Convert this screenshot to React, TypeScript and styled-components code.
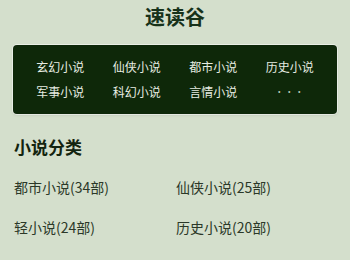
import React from "react";
import styled, { createGlobalStyle } from "styled-components";

const Global = createGlobalStyle`
  html, body { margin: 0; padding: 0; background: #d4dfcc; }
  body { font-family: "Noto Sans CJK SC", "Noto Sans", sans-serif; }
`;

const Page = styled.div`
  width: 350px;
  height: 260px;
  overflow: hidden;
  background: #d4dfcc;
`;

const Title = styled.h1`
  margin: 0;
  height: 34px;
  line-height: 34px;
  text-align: center;
  font-size: 20px;
  font-weight: 700;
  color: #17321a;
`;

const Nav = styled.nav`
  margin: 11px 13px 0;
  padding: 9px 9px 10px;
  background: #0e2809;
  border-radius: 4px;
  box-shadow: 0 0 0 1px rgba(255, 255, 255, 0.55), 0 1px 3px rgba(0, 0, 0, 0.12);
  display: grid;
  grid-template-columns: repeat(4, 1fr);
  grid-auto-rows: 25px;
`;

const NavItem = styled.a<{ $more?: boolean }>`
  display: flex;
  align-items: center;
  justify-content: center;
  font-size: ${(p) => (p.$more ? "9px" : "12px")};
  letter-spacing: ${(p) => (p.$more ? "1px" : "0")};
  color: ${(p) => (p.$more ? "#b8c4b3" : "#e6ece2")};
  text-decoration: none;
`;

const Section = styled.section`
  padding: 20px 14px 0;
`;

const Heading = styled.h2`
  margin: 0 0 7px;
  font-size: 17px;
  line-height: 26px;
  font-weight: 700;
  color: #13240f;
`;

const List = styled.div`
  display: grid;
  grid-template-columns: 162px 1fr;
  grid-auto-rows: 40px;
`;

const Item = styled.a`
  display: flex;
  align-items: center;
  font-size: 14px;
  color: #2b3828;
  text-decoration: none;
`;

const nav = ["玄幻小说", "仙侠小说", "都市小说", "历史小说", "军事小说", "科幻小说", "言情小说"];
const cats = [
  "都市小说(34部)",
  "仙侠小说(25部)",
  "轻小说(24部)",
  "历史小说(20部)",
  "科幻小说(14部)",
  "游戏竞技(12部)",
];

export default function App() {
  return (
    <Page>
      <Global />
      <Title>速读谷</Title>
      <Nav>
        {nav.map((n) => (
          <NavItem key={n}>{n}</NavItem>
        ))}
        <NavItem $more>···</NavItem>
      </Nav>
      <Section>
        <Heading>小说分类</Heading>
        <List>
          {cats.map((c) => (
            <Item key={c}>{c}</Item>
          ))}
        </List>
      </Section>
    </Page>
  );
}
